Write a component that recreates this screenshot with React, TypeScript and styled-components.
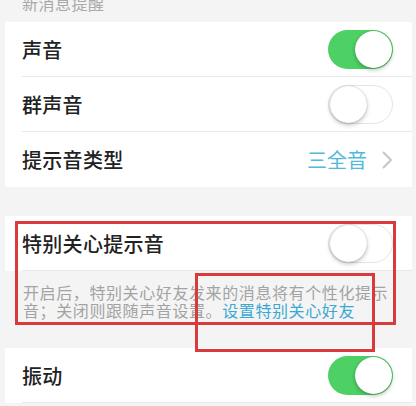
import React from "react";
import styled, { createGlobalStyle } from "styled-components";

const GlobalStyle = createGlobalStyle`
  html, body {
    margin: 0;
    padding: 0;
    background: #f4f4f4;
  }
  body {
    font-family: "Noto Sans CJK SC", "Noto Sans", sans-serif;
    width: 416px;
    height: 406px;
    overflow: hidden;
  }
`;

const Page = styled.div`
  position: relative;
  width: 416px;
  height: 406px;
  overflow: hidden;
  background: #f4f4f4;
`;

const SectionHeader = styled.div`
  height: 22px;
  box-sizing: border-box;
  padding: 0 0 11px 22px;
  display: flex;
  align-items: flex-end;
  overflow: hidden;
  font-size: 16px;
  line-height: 16px;
  color: #a9a9a9;
  letter-spacing: 0.5px;
`;

const Card = styled.div<{ $gapTop?: number }>`
  margin: ${(p) => p.$gapTop ?? 0}px 4px 0 5px;
  background: #ffffff;
`;

const Row = styled.div<{ $last?: boolean }>`
  height: 55px;
  box-sizing: border-box;
  margin-left: 17px;
  padding-right: 19px;
  display: flex;
  align-items: center;
  justify-content: space-between;
  border-bottom: ${(p) => (p.$last ? "none" : "1px solid #e8e8e8")};
`;

const Title = styled.span`
  font-size: 20px;
  font-weight: 500;
  color: #222222;
  letter-spacing: 0.3px;
`;

const ValueGroup = styled.div`
  display: flex;
  align-items: center;
  gap: 15px;
`;

const Value = styled.span`
  font-size: 20px;
  color: #52bad9;
`;

const Switch = styled.div<{ $on?: boolean }>`
  position: relative;
  width: 65px;
  height: 39px;
  box-sizing: border-box;
  border-radius: 20px;
  display: flex;
  align-items: center;
  justify-content: ${(p) => (p.$on ? "flex-end" : "flex-start")};
  padding: 1px;
  background: ${(p) => (p.$on ? "#4dd164" : "#ffffff")};
  border: ${(p) => (p.$on ? "none" : "1.5px solid #e4e4e4")};
`;

const Knob = styled.div`
  width: 37px;
  height: 37px;
  border-radius: 50%;
  background: #ffffff;
  box-shadow: 0 2px 4px rgba(0, 0, 0, 0.25), 0 0 1px rgba(0, 0, 0, 0.3);
`;

const Description = styled.div`
  box-sizing: border-box;
  height: 77px;
  padding: 12px 23px 0 23px;
  font-size: 16px;
  line-height: 18px;
  letter-spacing: 0.6px;
  color: #a3a3a3;
`;

const Link = styled.span`
  color: #3aa8d3;
`;

const Annotation = styled.div<{ $l: number; $t: number; $w: number; $h: number }>`
  position: absolute;
  left: ${(p) => p.$l}px;
  top: ${(p) => p.$t}px;
  width: ${(p) => p.$w}px;
  height: ${(p) => p.$h}px;
  box-sizing: border-box;
  border: 3px solid #d93a3c;
  pointer-events: none;
`;

const Chevron = () => (
  <svg width="11" height="18" viewBox="0 0 11 18">
    <polyline
      points="1.5,1.5 9,9 1.5,16.5"
      fill="none"
      stroke="#c4c4c8"
      strokeWidth="1.8"
      strokeLinecap="round"
      strokeLinejoin="round"
    />
  </svg>
);

const Toggle = ({ on }: { on?: boolean }) => (
  <Switch $on={on}>
    <Knob />
  </Switch>
);

export default function App() {
  return (
    <Page>
      <GlobalStyle />
      <SectionHeader>新消息提醒</SectionHeader>
      <Card>
        <Row>
          <Title>声音</Title>
          <Toggle on />
        </Row>
        <Row>
          <Title>群声音</Title>
          <Toggle />
        </Row>
        <Row $last>
          <Title>提示音类型</Title>
          <ValueGroup>
            <Value>三全音</Value>
            <Chevron />
          </ValueGroup>
        </Row>
      </Card>
      <Card $gapTop={29}>
        <Row>
          <Title>特别关心提示音</Title>
          <Toggle />
        </Row>
      </Card>
      <Description>
        开启后，特别关心好友发来的消息将有个性化提示音；关闭则跟随声音设置。<Link>设置特别关心好友</Link>
      </Description>
      <Card>
        <Row>
          <Title>振动</Title>
          <Toggle on />
        </Row>
      </Card>
      <Annotation $l={15} $t={221} $w={381} $h={104} />
      <Annotation $l={195} $t={273} $w={180} $h={79} />
    </Page>
  );
}
